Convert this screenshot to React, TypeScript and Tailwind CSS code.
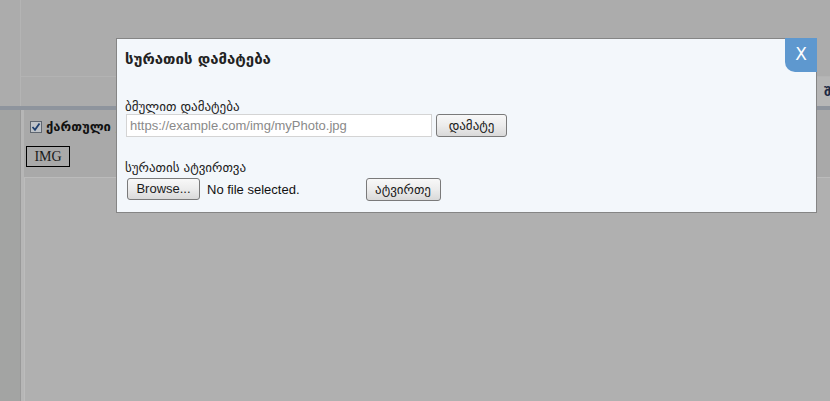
import React from "react";

const geo = { fontFamily: '"DejaVu Sans", "Noto Sans", sans-serif' };
const sans = { fontFamily: '"Liberation Sans", Arial, sans-serif' };

function Btn({ children, className = "" }: { children: React.ReactNode; className?: string }) {
  return (
    <div
      className={
        "flex items-center justify-center rounded-[3px] border border-[#7a7a7a] bg-gradient-to-b from-[#f8f8f8] via-[#ececec] to-[#d9d9d9] text-[#1a1a1a] " +
        className
      }
    >
      {children}
    </div>
  );
}

export default function App() {
  return (
    <div className="relative w-[830px] h-[401px] overflow-hidden bg-[#b0b0b0]">
      {/* underlying page (dimmed) */}
      <div className="flex flex-col h-full">
        {/* header */}
        <div className="flex h-[106px] bg-[#acacac]">
          <div className="w-[21px] border-r border-[#b4b4b4]" />
          <div className="flex-1 flex flex-col">
            <div className="h-[77px] border-b border-[#b3b3b3]" />
            <div className="flex-1 flex">
              <div className="flex-1" />
              <div className="w-[130px] bg-[#b6b6b6] relative">
                <span
                  className="absolute left-[124px] top-[5px] text-[13px] font-bold text-[#1c2a44]"
                  style={geo}
                >
                  შ
                </span>
              </div>
            </div>
          </div>
        </div>
        <div className="h-[4px] bg-[#8e949d]" />
        {/* body */}
        <div className="flex flex-1">
          <div className="w-[21px] bg-[#a3a4a3] border-r border-[#999999]" />
          <div className="w-[3px] bg-[#b6b6b6]" />
          <div className="flex-1 flex flex-col">
            <div className="h-[68px] bg-[#a9a9a9] flex flex-col pl-[2px] pt-[7px] border-b border-[#bbbbbb]">
              <div className="flex items-center gap-[4px] pl-[4px]">
                <div className="w-[12px] h-[12px] border border-[#5f6670] bg-[#bfc3c8] flex items-center justify-center">
                  <svg width="10" height="10" viewBox="0 0 10 10">
                    <path d="M1.5 5 L4 7.8 L8.5 1.5" stroke="#1f3f6e" strokeWidth="1.8" fill="none" />
                  </svg>
                </div>
                <span className="text-[13px] font-bold text-[#111]" style={geo}>
                  ქართული ,
                </span>
              </div>
              <div
                className="mt-[9px] w-[44px] h-[21px] border border-black flex items-center justify-center text-[14px] text-[#1a1a1a]"
                style={{ fontFamily: '"Liberation Serif", serif' }}
              >
                IMG
              </div>
            </div>
            <div className="flex-1 border-l border-[#bcbcbc] bg-[#b0b0b0]" />
          </div>
        </div>
      </div>

      {/* modal */}
      <div className="absolute left-[116px] top-[38px] w-[701px] h-[175px] border border-[#858585] bg-[#f3f7fb]">
        <div className="absolute right-[-1px] top-[-1px] w-[32px] h-[34px] rounded-bl-[10px] bg-[#5e98cf] flex items-center justify-center">
          <span className="text-white text-[17px]" style={{ fontFamily: '"DejaVu Sans", sans-serif' }}>
            X
          </span>
        </div>
        <div className="flex flex-col pl-[8px]">
          <div className="mt-[10px] h-[20px] flex items-center text-[15px] font-bold text-[#222]" style={geo}>
            სურათის დამატება
          </div>
          <div className="mt-[30px] h-[15px] flex items-center text-[13px] text-[#222]" style={geo}>
            ბმულით დამატება
          </div>
          <div className="flex items-center gap-[4px]">
            <div
              className="ml-[1px] w-[306px] h-[23px] border border-[#d4d4d4] bg-white flex items-center pl-[3px] text-[13px] text-[#8a8a8a]"
              style={sans}
            >
              https://example.com/img/myPhoto.jpg
            </div>
            <Btn className="w-[71px] h-[23px] text-[13px]">
              <span style={geo}>დამატე</span>
            </Btn>
          </div>
          <div className="mt-[23px] h-[16px] flex items-center text-[13px] text-[#222]" style={geo}>
            სურათის ატვირთვა
          </div>
          <div className="mt-[2px] flex items-start">
            <Btn className="ml-[2px] w-[73px] h-[22px] text-[13px]">
              <span style={sans}>Browse...</span>
            </Btn>
            <span className="ml-[7px] mt-[2px] text-[13px] text-[#111]" style={sans}>
              No file selected.
            </span>
            <Btn className="ml-[66px] w-[75px] h-[23px] text-[13px]">
              <span style={geo}>ატვირთე</span>
            </Btn>
          </div>
        </div>
      </div>
    </div>
  );
}
